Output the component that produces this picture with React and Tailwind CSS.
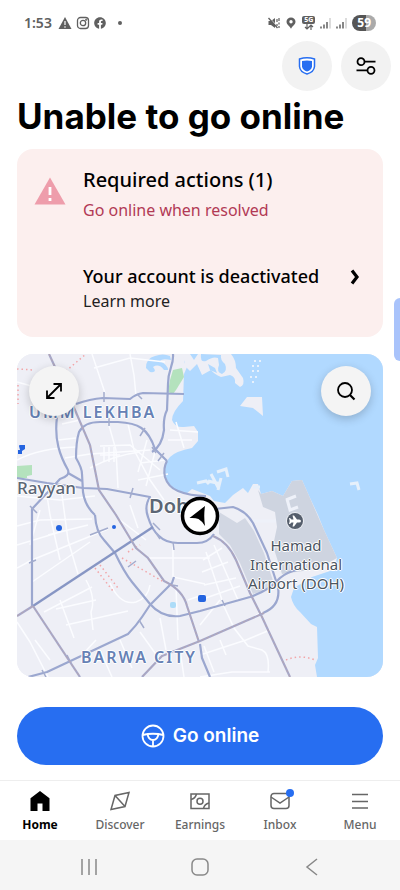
import React, { useState } from 'react';
import { FaFacebook } from 'react-icons/fa';

const majorRoads = [
  'M76 404 Q90 399 103 398 L130 399 Q136 394 143 393 L184 394',
  'M173 354 C174 366 168 368 168 384 L167 410 Q163 418 164 430 Q162 446 152 452',
  'M167 461 L155 449 C148 428 138 423 118 422 L100 422 Q84 422 79 432 Q76 442 76 458 Q82 468 82 474 L83 492 Q85 506 95 515',
  'M95 515 Q96 532 104 540 L115 553 Q124 572 132 582 L150 604 Q162 618 180 616 L200 611 L250 597 Q270 590 280 578 Q287 572 297 570',
  'M57 417 C54 440 60 456 68 470 Q70 476 60 479 L32 509 L32 606',
  'M68 473 L82 481',
  'M17 478 L47 483 L83 488 L107 489 L150 497 Q144 506 148 517 Q152 530 159 536 Q166 543 178 543 L197 543 Q208 543 214 534',
  'M167 461 Q163 468 165 477 Q168 487 178 491 Q190 496 206 496',
  'M215 509 L233 507 Q246 511 253 523 L267 553 L278 587 Q281 606 263 613',
  'M28 677 L47 672 L128 634 Q136 626 142 617 L150 605 L172 583 L174 577',
  'M200 644 L202 658 L210 677',
];

const railRoads = [
  'M49 354 L55 367 L75 410 L90 445 L99 490 L116 515 L136 548 L148 558 L164 581 Q183 590 187 606 L199 642',
  'M264 613 L200 641 L162 656 L142 677',
  'M213 536 Q228 542 236 560 L250 593 L262 617 L290 677',
  'M17 616 L33 606',
  'M33 606 L80 677',
];

const minorRoads = [
  'M92 354 L105 393 M130 354 L134 375 L136 396 M17 382 L60 394 M94 368 L130 358 L165 362',
  'M62 424 L80 420 M17 460 Q40 448 76 447 M58 440 L76 438 M65 458 L90 454 L150 450',
  'M108 422 L116 450 L118 488 M128 424 L134 450 L150 480 L164 500 M90 468 Q115 455 140 452',
  'M100 446 L130 445 L160 470 M104 447 L104 462 M109 447 L109 462 M114 447 L114 462 M100 455 L120 455',
  'M140 463 L166 460 M138 480 L168 474 M147 440 L138 472 M155 452 L146 486 M170 430 L198 432 M176 422 L184 448 M168 440 L192 440',
  'M17 496 L60 500 L95 496 M46 489 L50 515 L60 560 M62 495 L68 540 L78 574 M17 526 L40 520 L92 519',
  'M17 568 L32 560 L108 529 M17 545 L60 532 M32 582 L90 542 M48 535 L88 525 M40 510 L30 545',
  'M86 580 Q96 598 91 612 L93 630 M60 600 L74 638 M56 609 L96 600 M66 625 L128 611 M44 612 L92 587',
  'M110 583 Q120 606 136 602 Q148 598 150 585 M120 520 L146 540 M130 505 L138 528',
  'M148 558 L210 558 M173 543 L173 577 L205 584 M176 587 L178 640 M160 618 L166 650 M188 600 L205 594 M140 632 L160 660',
  'M17 622 L30 642 L48 677 M35 640 L50 660 M82 655 L96 640 M100 650 L112 677 M120 640 L132 668',
  'M203 560 L222 548 M202 572 L228 562 M204 585 L236 578 M206 552 L222 600 M214 545 L238 600 M200 600 L240 586',
  'M222 602 L234 628 L248 646 L262 650 Q270 654 268 672 M200 655 L246 640 L270 630 M204 646 L214 672 M220 640 L226 655',
  'M200 677 L232 672 L270 672 M180 650 L184 677 M220 600 L200 625 M262 612 L245 622',
];

const minorTicks =
  'M104 392 L104 402 M137 394 L142 399 M109 418 L109 426 M145 428 L140 436 M164 453 L158 461 M152 447 L156 453 M133 488 L130 498 M30 506 L37 513 M90 535 L108 528 M153 523 L160 530 M128 567 L136 561 M139 620 L144 628 M172 585 L178 586 M67 655 L71 663 M173 542 L174 550 M222 600 L225 606 M156 533 L160 539 M29 563 L36 560 M42 670 L46 677';

function CityMap() {
  return (
    <svg
      viewBox="17 354 366 323"
      preserveAspectRatio="xMidYMid slice"
      className="absolute inset-0 h-full w-full"
      fill="none"
      aria-hidden="true"
    >
      <rect x="17" y="354" width="366" height="323" fill="#eeeff6" />

      {/* Sea */}
      <path
        fill="#b1d9ff"
        d="M184 354 L184 362 L187 367 L184 374 L183 401 Q172 412 172 420 Q175 428 184 427 L194 426 L198 432 L198 441 L192 448 Q176 451 170 457 Q162 466 165 476 Q168 485 176 490 L186 494 L192 489 L210 496 L214 501 L225 503 L233 495 L243 488 L248 493 L253 484 L258 484 L261 494 L272 491 L283 496 L292 481 L302 480 L310 498 L318 515 L324 530 L337 558 L333 570 L312 577 L294 588 L291 597 Q293 606 300 612 L311 624 L317 627 L318 658 L315 665 L317 677 L383 677 L383 354 Z"
      />
      <path
        fill="#b1d9ff"
        d="M146 368 Q146 358 155 356 Q163 353 170 356 L171 360 Q162 358 160 361 Q168 365 168 370 L164 370 Q159 363 153 367 Q158 373 150 372 Z"
      />

      {/* Islands and the harbour piers */}
      <path
        fill="#eeeff6"
        d="M183 354 L231 354 Q236 360 236 368 L243 378 Q245 385 240 387 L235 383 Q236 377 230 375 L221 377 Q214 374 211 370 L202 375 L197 364 L190 371 L185 366 Z"
      />
      <path
        fill="#b1d9ff"
        d="M201 354 Q200 363 206 361 Q213 356 218 358 L219 365 Q216 372 222 374 Q228 371 225 364 Q220 360 221 355 Z M190 354 L194 360 L198 354 Z M208 364 L215 368 L217 373 L210 370 Z"
      />
      <path fill="#eeeff6" d="M240 406 L247 397 L262 397 L263 416 L253 408 Z" />
      <path
        stroke="#e8f1fc"
        strokeWidth="2"
        strokeDasharray="2 3"
        d="M254 361 L264 361 M252 366 L262 366 M252 371 L260 371 M250 377 L257 377 M252 382 L255 382"
      />
      <path
        stroke="#e6f0fb"
        strokeWidth="3"
        d="M211 474 L219 489 M208 481 L221 484 M221 478 L218 490 M217 472 L226 469 L228 477 M197 483 L206 481 L209 484 M350 484 L357 483 L359 490 M253 487 L260 487"
      />

      {/* Parks */}
      <path fill="#b4e2bd" d="M173 370 L182 368 L184 377 L176 390 L173 394 L168 392 L170 380 Z" />
      <path fill="#b4e2bd" d="M17 466 L32 465 L32 475 L27 476 L27 478 L17 478 Z" />

      {/* Airport ground */}
      <path fill="#ced4e0" d="M258 490 L261 494 L272 491 L283 496 L292 481 L302 480 L310 498 L324 530 L337 558 L328 563 L310 570 L282 574 L273 546 L277 527 L275 512 L263 507 Z" />
      <path fill="#d2d7e3" d="M219 512 L237 523 L245 518 L254 531 L264 553 L275 587 L253 594 L240 563 L230 545 L219 534 Z" />
      <path stroke="#eef1f9" strokeWidth="3" d="M286 500 L296 496 M287 499 L290 510 L298 507 M250 521 L276 521" />

      {minorRoads.map((d) => (
        <path key={d} d={d} stroke="#fbfcff" strokeWidth="1.5" />
      ))}
      <path
        stroke="#f2a5a8"
        strokeWidth="1.5"
        strokeDasharray="1.5 3"
        d="M17 369 L34 370 M66 371 L86 354 M18 385 L18 404 M122 558 L164 582 M128 552 L140 545 M95 568 L113 591 M100 565 L118 588 M286 660 Q300 654 315 660"
      />

      {majorRoads.map((d) => (
        <path key={d} d={d} stroke="#9ba7cf" strokeWidth="2.2" strokeLinejoin="round" />
      ))}
      <path d="M33 606 L153 527" stroke="#8796c4" strokeWidth="2.4" />
      <path d={minorTicks} stroke="#a3accd" strokeWidth="1.5" />
      {railRoads.map((d) => (
        <g key={d}>
          <path d={d} stroke="#a6a8ca" strokeWidth="2.2" />
          <path d={d} stroke="#b5a6b3" strokeWidth="1" strokeDasharray="3 2" />
        </g>
      ))}

      {/* Blue places */}
      <path fill="#2464e0" d="M19 446 Q19 445 20 445 L25 445 V449 L22 451 L22 454 H18 V450 H20 Z" />
      <rect x="198" y="595" width="8" height="7" rx="2" fill="#2464e0" />
      <circle cx="59" cy="528" r="3" fill="#2464e0" />
      <circle cx="114" cy="527" r="2" fill="#2464e0" />
      <rect x="170" y="602" width="6" height="6" rx="2" fill="#addcf8" />

      {/* Airport pin */}
      <circle cx="295" cy="521" r="9" fill="#fff" opacity=".6" />
      <circle cx="295" cy="521" r="8" fill="#555e6c" />
      <path
        fill="#fff"
        d="M301 521 Q301 522.500 299 522.500 L297 522.500 L294 526.500 H292.500 L293.500 522.500 H291.500 L290 524 H289 L289.700 521 L289 518 H290 L291.500 519.500 H293.500 L292.500 515.500 H294 L297 519.500 H299 Q301 519.500 301 521 Z"
      />
    </svg>
  );
}

const labelHalo =
  '[text-shadow:1px_0_#fff,-1px_0_#fff,0_1px_#fff,0_-1px_#fff,0_0_2px_#fff]';

function MapCard() {
  return (
    <section className="relative mx-[17px] mt-[17px] h-[323px] overflow-hidden rounded-2xl bg-[#eeeff6]" aria-label="Map">
      <CityMap />
      <span className={`absolute left-3 top-12 text-base leading-5 font-semibold tracking-[2px] text-[#6681b5] ${labelHalo}`}>
        UMM LEKHBA
      </span>
      <span className={`absolute left-0 top-[122px] text-[17px] leading-6 font-medium text-[#5c6675] ${labelHalo}`}>
        Rayyan
      </span>
      <span className={`absolute left-[132px] top-[138px] text-xl leading-7 font-semibold text-[#5c6675] ${labelHalo}`}>
        Doha
      </span>
      <span className={`absolute left-16 bottom-2.5 text-base leading-5 font-semibold tracking-[2px] text-[#6681b5] ${labelHalo}`}>
        BARWA CITY
      </span>
      <span className={`absolute left-[219px] top-[182px] w-[120px] text-center text-[15px] leading-[19px] text-[#4b5562] ${labelHalo}`}>
        Hamad International Airport (DOH)
      </span>

      {/* Current position */}
      <svg viewBox="0 0 40 40" className="absolute left-[163px] top-[142px] h-10 w-10" aria-hidden="true">
        <circle cx="20" cy="20" r="17.500" fill="#fff" stroke="#000" strokeWidth="3.500" />
        <path d="M25 10 L9.500 22 Q15 21.500 18.500 23 Q22 25 25 30 Q23.500 20 25 10 Z" fill="#000" />
      </svg>

      <button
        type="button"
        aria-label="Expand map"
        className="absolute left-3 top-3 flex h-[50px] w-[50px] items-center justify-center rounded-full bg-[#f4f4f4] shadow-[0_3px_10px_rgba(0,0,0,0.2)]"
      >
        <svg viewBox="0 0 18 18" className="h-[18px] w-[18px]" fill="none" stroke="#000" strokeWidth="1.800">
          <path d="M2 16 L16 2 M8.500 2 H16 V9.500 M2 8.500 V16 H9.500" />
        </svg>
      </button>
      <button
        type="button"
        aria-label="Search map"
        className="absolute right-3 top-3 flex h-[50px] w-[50px] items-center justify-center rounded-full bg-[#f4f4f4] shadow-[0_3px_10px_rgba(0,0,0,0.2)]"
      >
        <svg viewBox="0 0 20 20" className="h-5 w-5" fill="none" stroke="#000" strokeWidth="1.800">
          <circle cx="9" cy="9" r="7" />
          <path d="M14 14 L18.500 18.500" strokeWidth="2.200" />
        </svg>
      </button>
    </section>
  );
}

function StatusBar() {
  return (
    <div className="flex h-[41px] items-center justify-between px-6 pt-1 text-[#606060]">
      <div className="flex items-center gap-1">
        <span className="pr-0.5 text-sm leading-5 font-semibold">1:53</span>
        <svg viewBox="0 0 14 14" className="h-[14px] w-[14px]">
          <path d="M7 1 L13.500 13 H0.500 Z" fill="currentColor" />
          <path d="M7 5 V9 M7 10.300 V11.700" stroke="#fff" strokeWidth="1.200" />
        </svg>
        <svg viewBox="0 0 14 14" className="h-[14px] w-[14px]" fill="none" stroke="currentColor" strokeWidth="1.300">
          <rect x="1.500" y="1.500" width="11" height="11" rx="3" />
          <circle cx="7" cy="7" r="2.700" />
          <circle cx="10.200" cy="3.800" r="0.400" />
        </svg>
        <FaFacebook className="h-3 w-3" />
        <span className="ml-2 h-1 w-1 rounded-full bg-current" />
      </div>
      <div className="flex items-center gap-[5px]">
        <svg viewBox="0 0 12 12" className="h-3 w-3" fill="none" stroke="currentColor">
          <path d="M0.500 4 H3 L7 1 V11 L3 8 H0.500 Z" fill="currentColor" stroke="none" />
          <path d="M1.500 1 L9.500 9.500" stroke="#fff" />
          <path d="M0.500 1 L9.500 11" strokeWidth="1.300" />
          <path d="M9 2 V5 M9 7 V9 M11 1 V4 M11 5.500 V7.500 M11 9 V11" strokeWidth="1.200" />
        </svg>
        <svg viewBox="0 0 12 12" className="h-3 w-3">
          <path
            fill="currentColor"
            fillRule="evenodd"
            d="M6 0.500 C3.500 0.500 1.500 2.300 1.500 4.800 C1.500 7.200 4 8.500 6 11.800 C8 8.500 10.500 7.200 10.500 4.800 C10.500 2.300 8.500 0.500 6 0.500 Z M6 3 A1.700 1.700 0 1 1 6 6.400 A1.700 1.700 0 1 1 6 3 Z"
          />
        </svg>
        <span className="flex flex-col items-center">
          <span className="rounded-xs bg-[#606060] px-0.5 text-[7px] leading-2 font-bold text-white">5G</span>
          <svg viewBox="0 0 10 6" className="h-1.5 w-2.5" fill="none" stroke="currentColor" strokeWidth="1.200">
            <path d="M3 0 V5 M1 3 L3 5 L5 3 M7 6 V1 M5 3 L7 1 L9 3" />
          </svg>
        </span>
        {['sim1', 'sim2'].map((sim) => (
          <svg key={sim} viewBox="0 0 11 12" className="h-3 w-[11px]" fill="none" stroke="currentColor" strokeWidth="1.500">
            <path d="M1 9.500 V11.500 M4 7.500 V11.500 M7 5 V11.500" />
            <path d="M10 1 V11.500" stroke="#d0d0d0" />
          </svg>
        ))}
        <span className="h-4 rounded-full bg-linear-to-r from-[#555] from-60% to-[#aaa] to-60% px-[5px] text-xs leading-4 font-bold text-white">
          59
        </span>
      </div>
    </div>
  );
}

const tabs = [
  {
    name: 'Home',
    icon: <path d="M12 2 L2.500 9.300 V22 H9.500 V14.500 H14.500 V22 H21.500 V9.300 Z" fill="currentColor" stroke="none" />,
  },
  {
    name: 'Discover',
    icon: <path d="M21 3.500 L7 6.500 L3 20.500 L17 17.500 Z M7 6.500 L17 17.500" />,
  },
  {
    name: 'Earnings',
    icon: (
      <>
        <rect x="3" y="5" width="18" height="14.500" />
        <circle cx="12" cy="12.200" r="3" />
        <path d="M3 10.500 Q7.500 9.500 8.500 5 M21 14 Q16.500 15 15.500 19.500" />
      </>
    ),
  },
  {
    name: 'Inbox',
    badge: true,
    icon: (
      <>
        <rect x="3" y="4.500" width="18" height="15" rx="3" />
        <path d="M3 8 L12 14 L21 8" />
      </>
    ),
  },
  { name: 'Menu', icon: <path d="M4 5.500 H20 M4 12.500 H20 M4 19 H20" /> },
];

export default function App() {
  const [active, setActive] = useState('Home');

  return (
    <div className="relative flex min-h-screen flex-col bg-white font-['Noto_Sans',sans-serif] text-black">
      <StatusBar />

      <header>
        <div className="flex justify-end gap-[9px] pr-[9px]">
          <button type="button" aria-label="Safety" className="flex h-[50px] w-[50px] items-center justify-center rounded-full bg-[#f2f2f2]">
            <svg viewBox="0 0 20 20" className="h-5 w-5">
              <path d="M2.500 3 Q10 0.500 17.500 3 V10.500 Q17 16 10 18 Q3 16 2.500 10.500 Z" fill="#fff" stroke="#276ef1" strokeWidth="1.500" />
              <path d="M5 5 Q10 3.800 15 5 V10.500 Q14.500 14 10 15.500 Q5.500 14 5 10.500 Z" fill="#276ef1" />
            </svg>
          </button>
          <button type="button" aria-label="Preferences" className="flex h-[50px] w-[50px] items-center justify-center rounded-full bg-[#f2f2f2]">
            <svg viewBox="0 0 20 20" className="h-5 w-5" fill="none" stroke="#000" strokeWidth="1.800">
              <circle cx="5" cy="5.700" r="3.500" />
              <circle cx="15" cy="14.300" r="3.500" />
              <path d="M8.500 5.700 H19.500 M0.500 14.300 H11.500" />
            </svg>
          </button>
        </div>
        <h1 className="px-[17px] text-[35px] leading-[50px] font-bold font-['Inter',sans-serif]">Unable to go online</h1>
      </header>

      <section className="mx-[17px] mt-2 rounded-2xl bg-[#fcefee] pt-4 pb-6">
        <div className="flex">
          <svg viewBox="0 0 32 28" className="ml-[17px] mr-[17px] mt-3 h-7 w-8" aria-hidden="true">
            <path d="M16 0.500 L31.500 27.500 H0.500 Z" fill="#ee9dab" />
            <path d="M16 10 V18 M16 21 V24" stroke="#fff" strokeWidth="2.800" />
          </svg>
          <div>
            <h2 className="text-xl leading-[30px] font-medium">Required actions (1)</h2>
            <p className="text-base leading-[30px] text-[#b23a55]">Go online when resolved</p>
          </div>
        </div>
        <a href="#account" className="mt-[38px] flex items-start pr-[22px] pl-[66px]">
          <span className="flex-1">
            <span className="block text-lg leading-[26px] font-medium">Your account is deactivated</span>
            <span className="block text-base leading-6 text-[#222]">Learn more</span>
          </span>
          <svg viewBox="0 0 12 16" className="mt-[6px] h-4 w-3" fill="none" stroke="#000" strokeWidth="3.200">
            <path d="M3 1.500 L8 8 L3 14.500" />
          </svg>
        </a>
      </section>

      <MapCard />

      <div className="px-[17px] pt-[30px] pb-[15px]">
        <button
          type="button"
          className="flex h-[58px] w-full items-center justify-center gap-2 rounded-full bg-[#276ef1] font-['Inter',sans-serif] text-[19px] font-semibold text-white"
        >
          <svg viewBox="0 0 24 24" className="h-6 w-6" fill="none" stroke="currentColor" strokeWidth="1.800">
            <circle cx="12" cy="12" r="10.500" />
            <path d="M1.500 11 Q12 8.500 22.500 11 M6.500 10 Q7.500 16 12 16 Q16.500 16 17.500 10 M12 16 V22.500" />
          </svg>
          Go online
        </button>
      </div>

      <nav className="grid h-[60px] grid-cols-5 border-t border-[#eee]">
        {tabs.map((tab) => (
          <button
            key={tab.name}
            type="button"
            onClick={() => setActive(tab.name)}
            className={`flex flex-col items-center gap-[2px] pt-2 text-xs leading-5 ${
              active === tab.name ? 'font-bold text-black' : 'font-medium text-[#666]'
            }`}
          >
            <span className="relative">
              <svg viewBox="0 0 24 24" className="h-6 w-6" fill="none" stroke="currentColor" strokeWidth="1.500">
                {tab.icon}
              </svg>
              {tab.badge && <span className="absolute -right-0.5 top-0 h-2 w-2 rounded-full bg-[#276ef1]" />}
            </span>
            {tab.name}
          </button>
        ))}
      </nav>

      {/* System navigation */}
      <div className="flex h-[50px] items-center justify-between bg-[#f5f5f5] px-20 pt-1 text-[#888]">
        <button type="button" aria-label="Recent apps">
          <svg viewBox="0 0 18 18" className="h-[18px] w-[18px]" fill="none" stroke="currentColor" strokeWidth="1.500">
            <path d="M2 1 V17 M9 1 V17 M16 1 V17" />
          </svg>
        </button>
        <button type="button" aria-label="Home screen">
          <svg viewBox="0 0 18 18" className="h-[18px] w-[18px]" fill="none" stroke="currentColor" strokeWidth="1.500">
            <rect x="1" y="1" width="16" height="16" rx="5" />
          </svg>
        </button>
        <button type="button" aria-label="Back">
          <svg viewBox="0 0 18 18" className="h-[18px] w-[18px]" fill="none" stroke="currentColor" strokeWidth="1.500">
            <path d="M15 1 L5 9 L15 17" />
          </svg>
        </button>
      </div>

      {/* Edge panel handle */}
      <div className="absolute top-[298px] right-0 h-[63px] w-1.5 rounded-l-md bg-[#a9c3fb]" />
    </div>
  );
}
